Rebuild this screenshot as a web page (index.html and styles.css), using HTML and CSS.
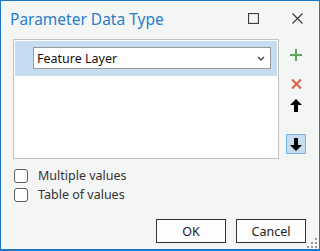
FILE: index.html
```html
<!DOCTYPE html>
<html lang="en">
<head>
<meta charset="UTF-8">
<title>Parameter Data Type</title>
<link rel="stylesheet" href="styles.css">
</head>
<body>
<div class="window">
	<div class="titlebar">
		<span class="title">Parameter Data Type</span>
		<span class="tbtn max"><svg width="11" height="11" viewBox="0 0 11 11"><rect x="0.5" y="0.5" width="10" height="10" fill="none" stroke="#3c3c3c" stroke-width="1.2"/></svg></span>
		<span class="tbtn close"><svg width="11" height="11" viewBox="0 0 11 11"><path d="M0.5 0.5 L10.5 10.5 M10.5 0.5 L0.5 10.5" stroke="#3c3c3c" stroke-width="1.2"/></svg></span>
	</div>
	<div class="content">
		<div class="listrow">
			<div class="listbox">
				<div class="item">
					<div class="combo">
						<span>Feature Layer</span>
						<svg width="8" height="5" viewBox="0 0 8 5"><path d="M1 1 L4 4 L7 1" fill="none" stroke="#444" stroke-width="1.4"/></svg>
					</div>
				</div>
			</div>
			<div class="tools">
				<span class="tool add"><svg width="12" height="12" viewBox="0 0 12 12"><path d="M6 0 V12 M0 6 H12" stroke="#5aa55a" stroke-width="2"/></svg></span>
				<span class="tool del"><svg width="11" height="10" viewBox="0 0 11 10"><path d="M1 0.5 L10 9.5 M10 0.5 L1 9.5" stroke="#d2694b" stroke-width="2.2"/></svg></span>
				<span class="tool up"><svg width="12" height="13" viewBox="0 0 12 13"><path d="M6 0 L12 6 H8 V13 H4 V6 H0 Z" fill="#000"/></svg></span>
				<span class="tool down"><svg width="12" height="13" viewBox="0 0 12 13"><path d="M4 0 H8 V7 H12 L6 13 L0 7 H4 Z" fill="#000"/></svg></span>
			</div>
		</div>
		<label class="check"><span class="box"></span>Multiple values</label>
		<label class="check"><span class="box"></span>Table of values</label>
		<div class="buttons">
			<span class="btn">OK</span>
			<span class="btn">Cancel</span>
		</div>
	</div>
	<svg class="grip" width="10" height="10" viewBox="0 0 10 10" fill="#9a9a9a">
		<rect x="8" y="0" width="2" height="2"/>
		<rect x="4" y="4" width="2" height="2"/><rect x="8" y="4" width="2" height="2"/>
		<rect x="0" y="8" width="2" height="2"/><rect x="4" y="8" width="2" height="2"/><rect x="8" y="8" width="2" height="2"/>
	</svg>
</div>
</body>
</html>
```

FILE: styles.css
```css
* { padding: 0; margin: 0; box-sizing: border-box; }
html, body { height: 100%; overflow: hidden; }
body { font-family: "Noto Sans", "Open Sans", sans-serif; color: #262626; background: #f4f4f4; }
.window { position: relative; width: 320px; height: 251px; border: 1px solid #1b78c8; border-bottom-width: 2px; background: #f4f5f5; display: flex; flex-direction: column; }
.titlebar { height: 38px; display: flex; align-items: center; padding-left: 9px; }
.title { flex: 1; font-size: 15.5px; color: #2a7dc9; margin-top: -2px; }
.tbtn { display: flex; margin-top: -3px; }
.max { margin-right: 33px; }
.close { margin-right: 16px; }
.content { padding: 0 13px 0 12px; display: flex; flex-direction: column; }
.listrow { display: flex; }
.listbox { width: 266px; height: 120px; border: 1px solid #c2c2c2; background: #fff; padding: 1px; }
.item { height: 35px; background: #c6dcf0; padding: 6px 6px 0 18px; }
.combo { height: 22px; border: 1px solid #999; background: #fff; display: flex; align-items: center; justify-content: space-between; padding: 0 5px 0 3px; font-size: 12.5px; color: #111; }
.tools { display: flex; flex-direction: column; margin-left: 7px; width: 20px; }
.tool { width: 20px; height: 20px; display: flex; align-items: center; justify-content: center; }
.add { margin-top: 6px; }
.del { margin-top: 9px; }
.up { margin-top: 1px; }
.down { margin-top: 19px; background: #c6dcf0; border: 1px solid #72b6ea; }
.check { display: flex; align-items: center; height: 19px; font-size: 12.5px; color: #333; }
.check:first-of-type { margin-top: 7px; }
.box { width: 14px; height: 14px; border: 1px solid #5c5c5c; border-radius: 3px; background: #fff; margin-left: 1px; margin-right: 10px; }
.buttons { display: flex; justify-content: flex-end; gap: 10px; margin-top: 15px; }
.btn { width: 70px; height: 24px; border: 1px solid #333; background: #fdfdfd; display: flex; align-items: center; justify-content: center; font-size: 12.5px; color: #222; }
.grip { position: absolute; right: 2px; bottom: 1px; }
```
